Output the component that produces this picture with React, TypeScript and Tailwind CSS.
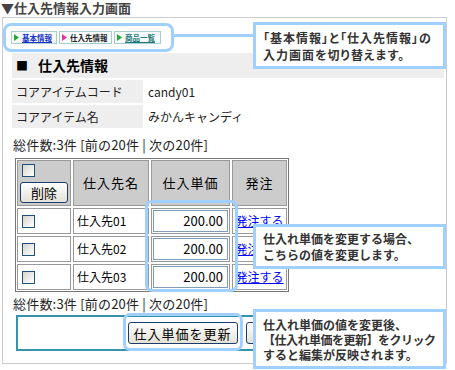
const rows = [
  { name: "仕入先01", price: "200.00" },
  { name: "仕入先02", price: "200.00" },
  { name: "仕入先03", price: "200.00" },
];

function Tri({ color }: { color: string }) {
  return (
    <svg width="5" height="7" viewBox="0 0 5 7" className="shrink-0">
      <polygon points="0,0 5,3.5 0,7" fill={color} />
    </svg>
  );
}

function Check() {
  return (
    <span className="block h-[13px] w-[13px] border border-[#1c5180] bg-linear-to-br from-[#d6d6ce] to-white" />
  );
}

function XpButton({ label, className }: { label: string; className?: string }) {
  return (
    <button
      className={
        "flex items-center justify-center rounded-[3px] border border-[#1c3c6c] bg-linear-to-b from-white to-[#e4e1d6] text-[13px] leading-none text-black " +
        (className ?? "")
      }
    >
      {label}
    </button>
  );
}

export default function App() {
  return (
    <div className="relative h-[370px] w-[455px] overflow-hidden bg-white font-['Noto_Sans_CJK_JP',sans-serif] text-[#222]">
      <h1 className="h-[17px] pl-[1px] text-[13px] leading-[15px] font-bold text-[#444]">
        ▼仕入先情報入力画面
      </h1>

      <div className="ml-[2px] h-[347px] w-[445px] border border-[#ccc]">
        {/* tabs */}
        <div className="flex gap-[2px] pt-[13px] pl-[8px]">
          <div className="flex h-[13px] w-[46px] items-center gap-[3px] border border-[#a9cccf] bg-[#f7fbfb] pl-[2px]">
            <Tri color="#22aa33" />
            <span className="text-[7.5px] leading-none font-bold text-[#1a33cc] underline">基本情報</span>
          </div>
          <div className="flex h-[13px] w-[53px] items-center gap-[3px] border border-[#a9cccf] bg-[#f7fbfb] pl-[2px]">
            <Tri color="#ee3399" />
            <span className="text-[7.5px] leading-none font-bold text-[#222]">仕入先情報</span>
          </div>
          <div className="flex h-[13px] w-[47px] items-center gap-[3px] border border-[#a9cccf] bg-[#f7fbfb] pl-[2px]">
            <Tri color="#22aa33" />
            <span className="text-[7.5px] leading-none font-bold text-[#227777] underline">商品一覧</span>
          </div>
        </div>

        {/* section header */}
        <div className="mt-[9px] mr-[2px] ml-[9px] flex h-[25px] items-center bg-[#eee] pl-[4px] text-[14px] font-bold text-black">
          <span className="mr-[10px] text-[12px]">■</span>仕入先情報
        </div>

        <div className="mt-[2px] ml-[9px] flex h-[23px] items-center text-[12px]">
          <div className="flex h-full w-[131px] items-center bg-[#eee] pl-[4px]">コアアイテムコード</div>
          <div className="pl-[5px]">candy01</div>
        </div>
        <div className="mt-[2px] ml-[9px] flex h-[23px] items-center text-[12px]">
          <div className="flex h-full w-[131px] items-center bg-[#eee] pl-[4px]">コアアイテム名</div>
          <div className="pl-[5px]">みかんキャンディ</div>
        </div>

        <div className="mt-[9px] ml-[10px] text-[13px] leading-[16px] tracking-[0.2px]">総件数:3件 [前の20件 | 次の20件]</div>

        {/* table */}
        <div className="mt-[5px] ml-[12px] grid w-fit grid-cols-[54px_76px_79px_55px] grid-rows-[46px_26px_26px_26px] gap-[2px] border border-[#777] p-[1px] text-[12px] text-black">
          <div className="flex flex-col border border-[#999] bg-[#ccc] pt-[3px]">
            <span className="ml-[4px]">
              <Check />
            </span>
            <XpButton label="削除" className="mt-[5px] ml-[2px] h-[21px] w-[48px]" />
          </div>
          <div className="flex items-center justify-center border border-[#999] bg-[#ccc] text-[13px] tracking-[1px]">仕入先名</div>
          <div className="flex items-center justify-center border border-[#999] bg-[#ccc] text-[13px] tracking-[1px]">仕入単価</div>
          <div className="flex items-center justify-center border border-[#999] bg-[#ccc] text-[13px] tracking-[1px]">発注</div>

          {rows.map((r) => (
            <div key={r.name} className="contents">
              <div className="flex items-center border border-[#999] pl-[4px]">
                <Check />
              </div>
              <div className="flex items-center border border-[#999] pl-[3px]">{r.name}</div>
              <div className="flex items-center border border-[#999] px-[1px]">
                <div className="flex h-[22px] w-full items-center justify-end border border-[#7f9db9] pr-[4px] text-[13px]">
                  {r.price}
                </div>
              </div>
              <div className="flex items-center justify-center border border-[#999]">
                <a className="text-[12px] text-[#0000ff] underline">発注する</a>
              </div>
            </div>
          ))}
        </div>

        <div className="mt-[4px] ml-[10px] text-[13px] leading-[16px] tracking-[0.2px]">総件数:3件 [前の20件 | 次の20件]</div>

        <div className="mt-[3px] ml-[13px] flex h-[36px] w-[428px] items-center justify-center gap-[8px] border-2 border-[#3593aa]">
          <XpButton label="仕入単価を更新" className="h-[22px] w-[110px] tracking-[1px]" />
          <XpButton label="キャンセル" className="h-[22px] w-[87px]" />
        </div>
      </div>

      {/* highlights and notes */}
      <div className="absolute top-[23px] left-[3px] h-[29px] w-[171px] rounded-[8px] border-[3px] border-[#9fd0ff]" />
      <div className="absolute top-[34px] left-[173px] h-[3px] w-[81px] bg-[#9fd0ff]" />
      <div className="absolute top-[22px] left-[253px] flex h-[47px] w-[193px] flex-col justify-center border-[3px] border-[#9fd0ff] bg-white pl-[7px] text-[12px] leading-[17px] font-bold tracking-[1px] text-[#333] [font-feature-settings:'palt']">
        <p>「基本情報」と「仕入先情報」の</p>
        <p>入力画面を切り替えます。</p>
      </div>

      <div className="absolute top-[200px] left-[145px] h-[92px] w-[93px] rounded-[7px] border-[3px] border-[#9fd0ff]" />
      <div className="absolute top-[224px] left-[253px] flex h-[45px] w-[193px] flex-col justify-center border-[3px] border-[#9fd0ff] bg-white pl-[7px] text-[12px] leading-[16px] font-bold text-[#333]">
        <p>仕入れ単価を変更する場合、</p>
        <p>こちらの値を変更します。</p>
      </div>

      <div className="absolute top-[313px] left-[123px] h-[38px] w-[120px] rounded-[7px] border-[3px] border-[#9fd0ff]" />
      <div className="absolute top-[309px] left-[253px] flex h-[60px] w-[193px] flex-col justify-center border-[3px] border-[#9fd0ff] bg-white pl-[7px] text-[12px] leading-[15px] font-bold text-[#333]">
        <p>仕入れ単価の値を変更後、</p>
        <p className="tracking-[-0.5px]">【仕入れ単価を更新】をクリック</p>
        <p>すると編集が反映されます。</p>
      </div>
    </div>
  );
}
